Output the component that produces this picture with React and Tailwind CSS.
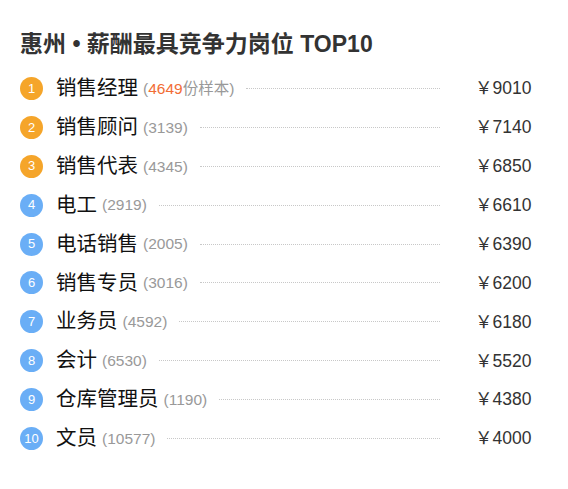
import React from "react";

const jobs = [
  { name: "销售经理", count: "4649", price: "9010", sample: true },
  { name: "销售顾问", count: "3139", price: "7140" },
  { name: "销售代表", count: "4345", price: "6850" },
  { name: "电工", count: "2919", price: "6610" },
  { name: "电话销售", count: "2005", price: "6390" },
  { name: "销售专员", count: "3016", price: "6200" },
  { name: "业务员", count: "4592", price: "6180" },
  { name: "会计", count: "6530", price: "5520" },
  { name: "仓库管理员", count: "1190", price: "4380" },
  { name: "文员", count: "10577", price: "4000" },
];

const App = () => {
  return (
    <div
      className="w-[568px] h-[489px] bg-white px-[20px] pt-[29px]"
      style={{ fontFamily: '"Liberation Sans", "Noto Sans CJK SC", sans-serif' }}
    >
      <h2 className="text-[23px] leading-[30px] font-bold text-[#333] mb-[10px]">
        惠州 • 薪酬最具竞争力岗位 TOP10
      </h2>

      <div>
        {jobs.map((job, i) => (
          <div key={job.name} className="flex items-center h-[38.9px]">
            <div
              className={
                i < 3
                  ? "w-[23px] h-[23px] rounded-full bg-[#f5a52a] text-white text-[13px] flex items-center justify-center shrink-0"
                  : "w-[23px] h-[23px] rounded-full bg-[#6aaef6] text-white text-[13px] flex items-center justify-center shrink-0"
              }
            >
              {i + 1}
            </div>
            <span className="ml-[13px] text-[20.5px] text-[#111] whitespace-nowrap">
              {job.name}
            </span>
            <span className="ml-[5px] text-[15.5px] text-[#999] whitespace-nowrap">
              (
              {job.sample ? (
                <>
                  <span className="text-[#f26d35]">{job.count}</span>份样本
                </>
              ) : (
                job.count
              )}
              )
            </span>
            <div className="flex-1 ml-[12px] border-t border-dotted border-[#c8c8c8]" />
            <div className="w-[108px] pl-[35px] text-[17.5px] text-[#333] whitespace-nowrap">
              ￥{job.price}
            </div>
          </div>
        ))}
      </div>
    </div>
  );
};

export default App;
